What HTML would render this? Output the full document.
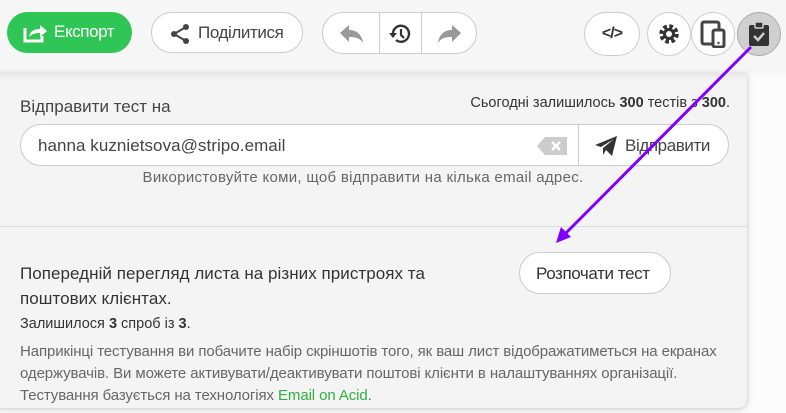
<!DOCTYPE html>
<html><head><meta charset="utf-8"><style>
*{box-sizing:border-box;margin:0;padding:0}
body{width:786px;height:413px;overflow:hidden;background:#f6f6f6;font-family:"Liberation Sans",sans-serif;color:#333;position:relative}
.abs{position:absolute}
.btn{position:absolute;border:1px solid #ccc;background:#fff;border-radius:21px}
.circ{position:absolute;width:44px;height:44px;border-radius:50%;border:1px solid #ccc;background:#fff;display:flex;align-items:center;justify-content:center}
.t{position:absolute;white-space:nowrap;letter-spacing:-0.4px}
</style></head><body>
<div class="abs" style="left:7px;top:12px;width:125px;height:41px;background:#30c655;border-radius:21px;color:#fff;font-size:17px;">
 <svg class="abs" style="left:15px;top:10px" width="26" height="22" viewBox="0 0 26 22"><path d="M3 6v13h17v-5" fill="none" stroke="#fff" stroke-width="3"/><path d="M7 15c1-6 5-8 11-8V3l7 6-7 6v-4c-5 0-8 1-11 4z" fill="#fff"/></svg>
 <span class="t" style="left:47px;top:10px">Експорт</span></div>
<div class="btn" style="left:151px;top:12px;width:152px;height:41px;font-size:17px">
 <svg class="abs" style="left:18px;top:10px" width="20" height="22" viewBox="0 0 20 22"><circle cx="16" cy="4" r="3" fill="#444"/><circle cx="4" cy="11" r="3" fill="#444"/><circle cx="16" cy="18" r="3" fill="#444"/><path d="M16 4L4 11l12 7" fill="none" stroke="#444" stroke-width="2"/></svg>
 <span class="t" style="left:46px;top:10px;color:#444">Поділитися</span></div>
<div class="btn" style="left:322px;top:12px;width:155px;height:42px;overflow:hidden">
 <div class="abs" style="left:56px;top:0;width:43px;height:42px;border-left:1px solid #ccc;border-right:1px solid #ccc"></div>
 <svg class="abs" style="left:17px;top:12px" width="24" height="18" viewBox="0 0 24 18"><path d="M0 8l9-8v5c8 0 13 5 14 13-3-5-7-6-14-6v5z" fill="#999"/></svg>
 <svg class="abs" style="left:65px;top:9px" width="24" height="24" viewBox="0 0 24 24"><path d="M5 12a8 8 0 1 1 3 6" fill="none" stroke="#333" stroke-width="2.4"/><path d="M1 11h8l-4 5z" fill="#333"/><path d="M13 7v6l3 3" fill="none" stroke="#333" stroke-width="2.2"/></svg>
 <svg class="abs" style="left:114px;top:12px" width="24" height="18" viewBox="0 0 24 18"><path d="M24 8l-9-8v5C7 5 2 10 1 18c3-5 7-6 14-6v5z" fill="#999"/></svg>
</div>
<div class="circ" style="left:584px;top:12px;width:56px;height:44px;border-radius:22px"><span style="font-weight:bold;font-size:16px;color:#333;letter-spacing:-1px">&lt;/&gt;</span></div>
<div class="circ" style="left:647px;top:12px"><svg width="24" height="24" viewBox="0 0 24 24"><circle cx="12" cy="12" r="7.5" fill="none" stroke="#333" stroke-width="4.5" stroke-dasharray="3.5 2.4"/><circle cx="12" cy="12" r="6" fill="#333"/><circle cx="12" cy="12" r="3" fill="#fff"/></svg></div>
<div class="circ" style="left:691px;top:12px"><svg width="26" height="28" viewBox="0 0 26 28"><rect x="2" y="2" width="17" height="22" rx="2" fill="none" stroke="#444" stroke-width="3"/><rect x="13" y="10" width="11" height="17" rx="2" fill="#fff" stroke="#444" stroke-width="3"/><circle cx="18.5" cy="23" r="1.2" fill="#444"/></svg></div>
<div class="circ" style="left:737px;top:12px;background:#d0d0d0;border-color:#aaa"><svg width="22" height="26" viewBox="0 0 22 26"><rect x="1" y="4" width="20" height="21" rx="2" fill="#333"/><rect x="7" y="1" width="8" height="6" rx="1" fill="#333" stroke="#d0d0d0" stroke-width="1.5"/><path d="M6 15l4 4 6-7" fill="none" stroke="#ccc" stroke-width="2.5"/></svg></div>
<div class="abs" style="left:0;top:73px;width:786px;height:340px;background:#fbfbfb"></div>
<div class="abs" style="left:-10px;top:73px;width:758px;height:336px;background:#f4f4f4;border:1px solid #ddd;border-radius:0 0 10px 10px;box-shadow:0 1px 6px rgba(0,0,0,.15)"></div>
<div class="abs" style="left:0;top:73px;width:748px;height:6px;background:linear-gradient(#e6e6e6,#f4f4f4)"></div>
<div class="t" style="left:20px;top:97px;font-size:17px;color:#444;letter-spacing:0">Відправити тест на</div>
<div class="t" style="right:56px;top:95px;font-size:14.5px;color:#333;letter-spacing:0">Сьогодні залишилось <b>300</b> тестів з <b>300</b>.</div>
<div class="abs" style="left:20px;top:124px;width:709px;height:42px;background:#fff;border:1px solid #ccc;border-radius:21px">
 <span class="t" style="left:17px;top:11px;font-size:17px;color:#444;letter-spacing:0.05px">hanna kuznietsova@stripo.email</span>
 <svg class="abs" style="left:516px;top:12px" width="30" height="18" viewBox="0 0 30 18"><path d="M8 0h22v18H8L0 9z" fill="#ccc"/><path d="M15 5l8 8M23 5l-8 8" stroke="#fff" stroke-width="2.5"/></svg>
 <div class="abs" style="left:557px;top:0;height:40px;border-left:1px solid #ccc"></div>
 <svg class="abs" style="left:574px;top:11px" width="22" height="20" viewBox="0 0 22 20"><path d="M0 9L22 0 17 20 11 14 8 19V12L19 3 6 11z" fill="#333"/></svg>
 <span class="t" style="left:604px;top:11px;font-size:17px;color:#444">Відправити</span>
</div>
<div class="t" style="left:0;width:726px;text-align:center;top:169px;font-size:15px;color:#666;letter-spacing:0.3px">Використовуйте коми, щоб відправити на кілька email адрес.</div>
<div class="abs" style="left:0;top:226px;width:748px;border-top:1px solid #ddd"></div>
<div class="t" style="left:20px;top:261px;font-size:17px;color:#333;line-height:25px;letter-spacing:0.05px">Попередній перегляд листа на різних пристроях та<br>поштових клієнтах.</div>
<div class="btn" style="left:519px;top:252px;width:152px;height:42px"><span class="t" style="left:16px;top:11px;font-size:17px;color:#333">Розпочати тест</span></div>
<div class="t" style="left:20px;top:316px;font-size:14.5px;color:#333;letter-spacing:0">Залишилося <b>3</b> спроб із <b>3</b>.</div>
<div class="t" style="left:20px;top:341px;font-size:15px;color:#666;line-height:22px;letter-spacing:-0.1px">Наприкінці тестування ви побачите набір скріншотів того, як ваш лист відображатиметься на екранах<br>одержувачів. Ви можете активувати/деактивувати поштові клієнти в налаштуваннях організації.<br>Тестування базується на технологіях <span style="color:#30b040">Email on Acid</span>.</div>
<svg class="abs" style="left:0;top:0" width="786" height="413"><line x1="751" y1="47" x2="563" y2="236" stroke="#8000ff" stroke-width="3"/><path d="M556 243l5-16 10 10z" fill="#8000ff"/></svg>
</body></html>
